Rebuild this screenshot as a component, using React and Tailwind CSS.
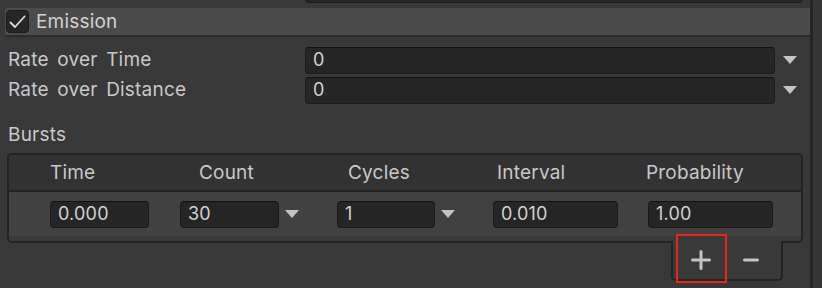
import React from 'react';

const font = { fontFamily: 'Inter, "Noto Sans", sans-serif' };

// Unity's Inter renders a touch wider than the browser's
const label = 'text-[19px] tracking-[0.2px] [word-spacing:3px] text-[#c8c8c8]';

const Caret = ({ className = '' }) => (
  <svg width="14" height="8" viewBox="0 0 14 8" className={`shrink-0 ${className}`}>
    <polygon points="0,0 14,0 7,8" fill="#c4c4c4" />
  </svg>
);

const Field = ({ value, className = '' }) => (
  <div
    className={`h-[27px] shrink-0 flex items-center px-[7px] bg-[#252525] border border-[#1b1b1b] border-t-[#111111] rounded-[4px] text-[18px] tracking-[0.2px] leading-none text-[#d2d2d2] ${className}`}
  >
    {value}
  </div>
);

const PropRow = ({ name, value }) => (
  <div className="h-[30px] flex items-center">
    <div className={`w-[305px] pl-[8px] leading-[30px] ${label}`}>{name}</div>
    <Field value={value} className="w-[470px]" />
    <Caret className="ml-[8px]" />
  </div>
);

const headers = ['Time', 'Count', 'Cycles', 'Interval', 'Probability'];

export default function App() {
  return (
    <div className="w-[822px] h-[288px] overflow-hidden flex bg-[#383838]" style={font}>
      <div className="w-[810px] flex flex-col">
        {/* bottom of the field above, cut off */}
        <div className="ml-[305px] w-[498px] h-[27px] -mt-[24px] bg-[#252525] border border-[#1b1b1b] rounded-[4px]" />

        {/* Emission module header */}
        <div className="ml-[5px] mt-[5px] h-[29px] flex items-center bg-[#4b4b4b] border-b-2 border-[#2b2b2b] rounded-tl-[3px]">
          <div className="ml-[1px] w-[23px] h-[23px] rounded-[4px] bg-[#262626] border border-[#1a1a1a] flex items-center justify-center">
            <svg width="17" height="14" viewBox="0 0 17 14">
              <path d="M1.5 7.5 L6 12 L15.5 1.5" fill="none" stroke="#dcdcdc" strokeWidth="1.8" strokeLinecap="round" strokeLinejoin="round" />
            </svg>
          </div>
          <span className="ml-[7px] text-[19px] tracking-[0.2px] leading-none text-[#d2d2d2]">Emission</span>
        </div>

        <div className="mt-[8px]">
          <PropRow name="Rate over Time" value="0" />
          <PropRow name="Rate over Distance" value="0" />
        </div>

        <div className={`mt-[15px] h-[30px] pl-[8px] leading-[30px] ${label}`}>Bursts</div>

        {/* Bursts list */}
        <div className="mt-[3px] ml-[7px] w-[796px] flex flex-col items-end">
          <div className="w-full border-2 border-[#232323] rounded-[5px] overflow-hidden">
            <div className={`h-[35px] grid grid-cols-[repeat(5,149px)] pl-[41px] items-center bg-[#323232] leading-[30px] ${label}`}>
              {headers.map((h) => (
                <div key={h}>{h}</div>
              ))}
            </div>
            <div className="h-[2px] bg-[#232323]" />
            <div className="h-[44px] flex items-center pl-[41px] bg-[#414141]">
              <Field value="0.000" className="w-[99px]" />
              <Field value="30" className="w-[99px] ml-[31px]" />
              <Caret className="ml-[6px]" />
              <Field value="1" className="w-[98px] ml-[38px]" />
              <Caret className="ml-[6px]" />
              <Field value="0.010" className="w-[125px] ml-[38px]" />
              <Field value="1.00" className="w-[125px] ml-[30px]" />
            </div>
            <div className="h-[5px] bg-[#393939]" />
          </div>

          {/* add / remove footer */}
          <div className="relative mr-[20px] -mt-[2px] w-[112px] h-[40px] flex items-center pl-[18px] bg-[#393939] border-2 border-t-0 border-[#232323] rounded-b-[5px]">
            <svg width="20" height="20" viewBox="0 0 20 20">
              <path d="M10 1.5 V18.5 M1.5 10 H18.5" stroke="#c4c4c4" strokeWidth="3" strokeLinecap="round" />
            </svg>
            <svg width="16" height="4" viewBox="0 0 16 4" className="ml-[32px]">
              <path d="M1.5 2 H14.5" stroke="#c4c4c4" strokeWidth="3" strokeLinecap="round" />
            </svg>
            <div className="absolute left-[3px] -top-[7px] w-[51px] h-[49px] border-2 border-[#ec2416]" />
          </div>
        </div>
      </div>
      <div className="w-[3px] bg-[#252525]" />
      <div className="flex-1 bg-[#363636]" />
    </div>
  );
}
